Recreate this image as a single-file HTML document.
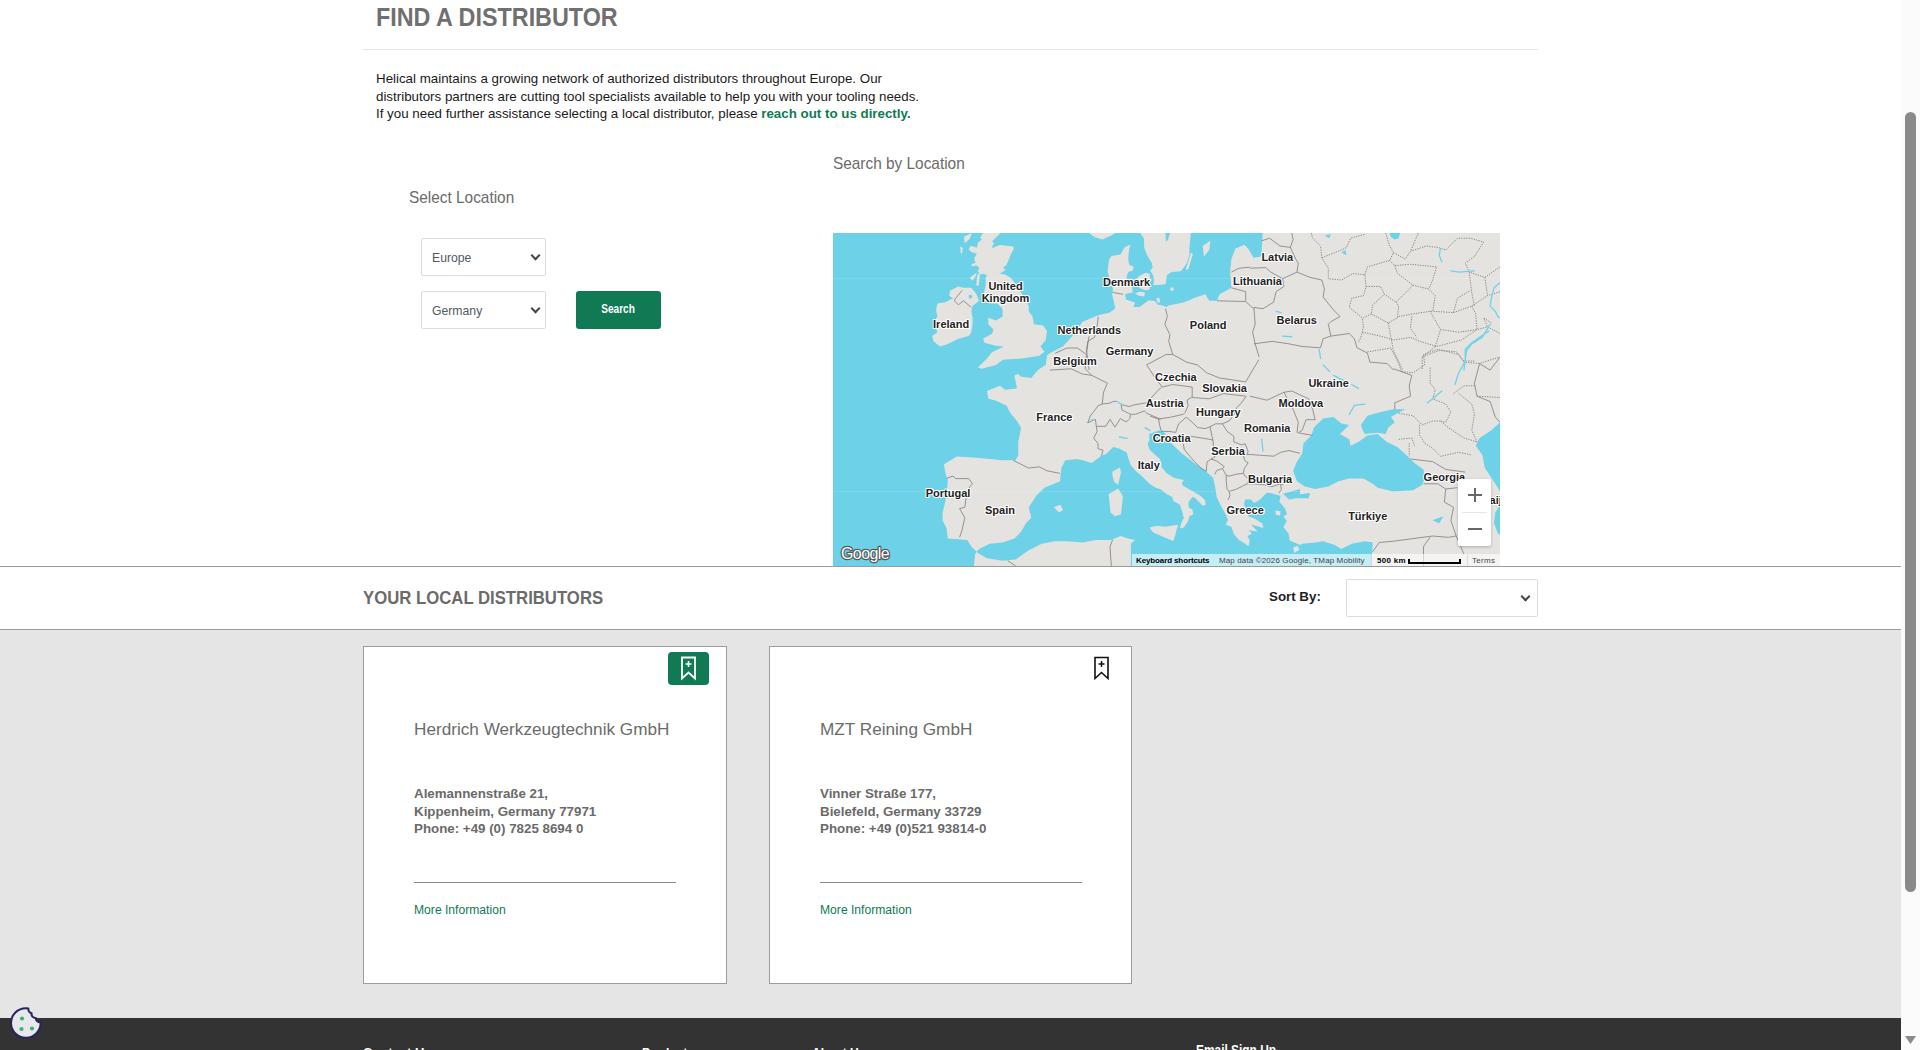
<!DOCTYPE html>
<html><head><meta charset="utf-8">
<style>
html,body{margin:0;padding:0;}
body{width:1920px;height:1050px;overflow:hidden;position:relative;background:#fff;font-family:"Liberation Sans",sans-serif;}
.abs{position:absolute;}
#sb{left:1901px;top:0;width:19px;height:1050px;background:#fbfbfb;}
#thumb{left:1905px;top:112px;width:11px;height:780px;background:#8a8a8a;border-radius:6px;}
h1{position:absolute;margin:0;left:376px;top:3px;font-size:25px;font-weight:bold;color:#707070;white-space:nowrap;transform:scaleX(0.934);transform-origin:0 0;}
#rule1{left:363px;top:49px;width:1175px;height:1px;background:#e8e8e8;}
#intro{left:376px;top:70px;font-size:13.33px;line-height:17.5px;color:#1a1a1a;white-space:nowrap;}
#intro a{color:#0f7a53;font-weight:bold;text-decoration:none;}
.tit{color:#6b6b6b;white-space:nowrap;transform:scaleX(0.905);transform-origin:0 0;}
.sel{position:absolute;box-sizing:border-box;border:1px solid #dcdcdc;border-radius:2px;background:#fff;}
.sel span{position:absolute;left:10px;font-size:13px;color:#505a5f;transform:scaleX(0.94);transform-origin:0 0;}
.chev{position:absolute;width:5px;height:5px;border-right:2px solid #3f474c;border-bottom:2px solid #3f474c;transform:rotate(45deg);}
#btn{left:576px;top:291px;width:85px;height:38px;background:#0f7a53;border-radius:3px;color:#fff;font-weight:bold;font-size:12px;text-align:center;line-height:36px;}
.attr{font-size:8px;line-height:9px;white-space:nowrap;}
#map{left:833px;top:233px;width:667px;height:333px;background:#6dd2e8;overflow:hidden;}
#rule2{left:0;top:566px;width:1901px;height:1px;background:#9a9a9a;}
#rule3{left:0;top:629px;width:1901px;height:1px;background:#9a9a9a;}
#grey{left:0;top:630px;width:1901px;height:388px;background:#e5e5e5;}
.ft{color:#fff;font-weight:bold;white-space:nowrap;}
#footer{left:0;top:1018px;width:1901px;height:32px;background:#333;}
.card{position:absolute;top:646px;height:338px;box-sizing:border-box;border:1px solid #9c9c9c;background:#fff;}
.card .name{position:absolute;left:50px;top:73px;font-size:17px;transform:scaleX(1.01);transform-origin:0 0;color:#6b6b6b;white-space:nowrap;}
.card .addr{position:absolute;left:50px;top:138px;font-size:13.33px;line-height:17.7px;font-weight:bold;color:#6a6a6a;white-space:nowrap;}
.card .hr{position:absolute;left:50px;top:235px;width:262px;height:1px;background:#8a8a8a;}
.card .more{position:absolute;left:50px;top:256px;font-size:12.5px;transform:scaleX(0.97);transform-origin:0 0;color:#0f7a53;white-space:nowrap;}
#ydist{left:363px;top:588px;font-size:17.5px;transform:scaleX(0.956);transform-origin:0 0;font-weight:bold;color:#6b6b6b;white-space:nowrap;}
#sortby{left:1269px;top:589px;font-size:13.33px;font-weight:bold;color:#222;white-space:nowrap;}
</style></head>
<body>
<div class="abs" id="sb"></div>
<div class="abs" id="thumb"></div>
<svg class="abs" style="left:1904px;top:1035px" width="13" height="10"><path d="M1 1 L12 1 L6.5 9 Z" fill="#8a8a8a"/></svg>

<h1>FIND A DISTRIBUTOR</h1>
<div class="abs" id="rule1"></div>
<div class="abs" id="intro">Helical maintains a growing network of authorized distributors throughout Europe. Our<br>distributors partners are cutting tool specialists available to help you with your tooling needs.<br>If you need further assistance selecting a local distributor, please <a>reach out to us directly.</a></div>

<div class="abs tit" id="selloc" style="left:409px;top:188px;font-size:17px;">Select Location</div>
<div class="abs tit" id="sbloc" style="left:833px;top:154px;font-size:17px;">Search by Location</div>

<div class="sel" style="left:421px;top:238px;width:125px;height:38px;"><span style="top:11px">Europe</span><div class="chev" style="left:110px;top:13px"></div></div>
<div class="sel" style="left:421px;top:291px;width:125px;height:38px;"><span style="top:11px">Germany</span><div class="chev" style="left:110px;top:13px"></div></div>
<div class="abs" id="btn"><span style="display:inline-block;transform:scaleX(0.84);">Search</span></div>

<div class="abs" id="map"><svg width="667" height="333" viewBox="0 0 667 333" style="display:block">
<rect width="667" height="333" fill="#e5e3df"/>
<path fill="#6dd2e8" d="M0.0 0.0 L256.1 0.0 L261.4 3.9 L269.2 6.5 L278.3 2.6 L282.2 0.0 L307.0 0.0 L310.9 5.2 L311.2 14.6 L314.2 22.2 L318.8 29.9 L319.6 34.4 L317.3 37.5 L320.3 42.8 L321.1 48.2 L320.3 52.0 L324.9 52.0 L332.5 51.2 L333.3 46.6 L334.1 42.1 L338.6 39.0 L347.8 38.2 L350.8 34.4 L353.9 29.9 L356.2 22.2 L356.6 13.0 L357.9 0.0 L429.7 0.0 L428.4 23.5 L420.5 24.8 L415.3 15.7 L411.4 11.7 L402.3 15.7 L398.4 26.1 L397.1 39.1 L398.4 54.8 L386.6 61.3 L384.0 67.8 L376.2 67.8 L372.3 61.3 L360.5 65.2 L351.4 69.2 L335.6 72.5 L333.3 74.1 L329.5 72.5 L324.9 71.8 L321.9 68.0 L315.8 67.2 L306.6 74.1 L300.5 74.1 L302.1 69.5 L292.9 66.4 L292.1 61.1 L299.8 59.6 L299.0 52.7 L293.7 49.7 L293.7 43.6 L295.2 39.0 L299.8 37.5 L300.5 33.7 L296.0 31.4 L295.2 26.1 L296.0 16.9 L297.5 11.6 L291.4 14.6 L287.6 21.5 L278.4 23.0 L276.1 26.8 L275.4 31.4 L274.6 39.0 L276.1 43.6 L280.0 55.8 L279.2 61.9 L280.7 68.0 L282.2 75.6 L276.9 79.4 L265.3 82.2 L249.6 88.7 L240.5 101.8 L230.0 113.5 L217.0 120.0 L214.0 122.8 L212.7 131.9 L204.9 137.1 L198.3 145.0 L187.9 143.7 L185.3 141.1 L181.4 142.4 L184.0 155.4 L172.2 156.7 L167.0 152.8 L154.0 158.0 L155.3 165.8 L161.8 167.2 L173.5 172.4 L177.5 180.2 L184.0 188.0 L187.9 194.6 L187.9 196.0 L185.3 209.0 L185.3 222.1 L182.7 227.3 L169.6 227.3 L156.6 226.0 L143.5 224.7 L124.0 223.4 L110.9 231.2 L112.2 239.1 L114.8 248.2 L113.5 261.2 L112.2 269.1 L109.6 279.5 L109.6 287.3 L113.5 295.2 L114.8 305.6 L125.3 306.3 L134.4 306.9 L138.3 313.4 L143.5 318.7 L142.2 321.3 L140.9 333.0 L0.0 333.0ZM143.5 318.7 L146.1 316.0 L156.6 310.8 L169.6 309.5 L181.4 305.6 L187.9 299.1 L193.1 289.9 L198.3 284.7 L195.7 274.3 L203.5 262.5 L211.4 254.7 L227.0 248.2 L228.3 235.1 L232.3 227.3 L244.0 226.0 L249.6 227.3 L258.8 229.9 L269.2 222.1 L272.7 221.3 L280.3 214.1 L286.0 215.6 L293.7 219.4 L295.6 226.0 L297.5 231.8 L303.2 238.4 L308.9 243.2 L316.5 250.8 L322.2 254.6 L328.0 256.5 L333.7 261.3 L339.4 264.1 L340.3 268.0 L347.0 271.8 L348.9 277.5 L350.8 285.1 L348.0 290.8 L347.0 295.6 L350.8 294.6 L354.6 288.9 L356.5 283.2 L360.3 281.3 L359.4 276.5 L355.6 274.6 L355.6 268.9 L359.4 264.1 L362.2 265.1 L367.0 269.9 L369.9 272.7 L372.7 271.8 L371.8 267.0 L368.0 263.2 L360.3 258.4 L349.9 252.7 L348.9 249.9 L350.8 247.0 L341.3 245.1 L333.7 240.3 L328.9 234.6 L327.0 226.0 L320.3 220.3 L316.5 216.5 L314.6 210.8 L316.5 207.0 L316.2 201.1 L326.6 197.2 L331.8 199.8 L337.0 208.9 L347.5 219.3 L362.2 230.8 L371.8 237.5 L380.1 244.7 L382.4 255.0 L383.6 264.1 L387.0 271.0 L389.3 275.6 L392.7 281.3 L395.0 287.0 L392.7 291.6 L398.4 293.9 L400.7 300.7 L405.3 306.4 L411.0 309.9 L415.6 313.3 L416.7 307.6 L414.4 303.0 L419.0 300.7 L415.6 297.3 L424.7 298.4 L417.9 291.6 L427.0 293.9 L430.4 295.0 L429.3 290.4 L422.4 285.9 L415.6 283.6 L413.3 277.9 L411.0 271.0 L412.1 266.4 L417.9 266.4 L421.3 269.9 L427.0 266.4 L433.9 259.6 L440.7 260.7 L447.6 263.0 L446.4 268.7 L452.1 275.6 L453.9 281.3 L450.4 283.6 L453.9 288.1 L450.4 293.9 L455.6 300.7 L456.7 307.6 L467.0 312.1 L469.2 310.8 L482.2 309.5 L490.1 308.2 L501.8 312.1 L508.3 316.0 L518.8 310.8 L531.8 308.2 L539.7 309.5 L538.3 333.0 L297.9 333.0 L297.9 310.8 L301.8 306.9 L295.3 305.6 L287.5 303.0 L278.3 306.9 L262.7 306.9 L249.6 309.5 L234.9 308.2 L221.8 308.2 L208.8 310.8 L195.7 317.3 L182.7 326.5 L169.6 327.8 L154.0 325.2 L144.8 320.0ZM500.5 184.1 L508.3 190.6 L516.2 191.9 L507.0 201.1 L516.2 206.3 L517.5 212.8 L525.3 208.9 L534.4 202.4 L544.9 201.1 L547.5 203.7 L554.0 208.9 L564.4 214.1 L577.5 225.9 L581.4 229.9 L590.5 236.4 L591.8 245.6 L589.2 252.1 L580.1 257.3 L560.5 258.6 L544.9 254.7 L539.7 250.8 L530.5 245.6 L516.2 245.6 L505.7 248.2 L495.3 253.4 L482.2 256.0 L471.8 253.4 L464.0 248.2 L460.1 237.8 L464.0 228.6 L469.2 220.7 L470.5 210.2 L478.3 202.4 L480.9 194.6 L490.1 185.4ZM527.9 191.9 L534.4 182.8 L547.5 178.9 L560.5 176.3 L572.3 176.3 L564.4 180.2 L557.9 184.1 L561.8 189.3 L555.3 194.6 L552.7 201.1 L544.9 199.8 L531.8 201.1 L529.2 195.9ZM667.0 189.3 L658.4 197.2 L646.6 205.0 L642.7 212.8 L649.3 222.0 L651.9 235.1 L662.3 250.8 L667.0 258.6ZM667.0 271.7 L662.3 279.5 L661.0 289.9 L664.9 300.4 L667.0 301.7ZM449.9 260.7 L467.0 256.1 L467.0 261.9 L456.7 264.1 L452.1 263.6 L477.0 259.9 L475.7 265.2 L462.7 265.2 L456.1 266.5ZM599.7 287.3 L610.1 283.4 L606.2 289.9Z"/>
<path fill="#e5e3df" d="M460.1 314.4 L464.7 312.7 L466.4 316.7 L461.3 320.1ZM442.4 277.3 L447.6 278.4 L447.0 282.4 L443.0 281.9ZM143.2 52.3 L144.4 41.5 L147.0 40.8 L145.7 53.0ZM127.2 13.4 L129.8 14.7 L129.1 20.4 L127.8 20.4ZM136.8 44.7 L143.8 39.6 L142.5 43.4 L139.3 47.8ZM150.2 0.0 L167.4 0.0 L159.1 8.3 L161.0 10.2 L158.5 15.3 L166.8 12.1 L180.2 13.4 L180.8 15.9 L178.2 20.4 L175.7 26.8 L173.1 32.5 L170.0 34.4 L172.5 37.0 L166.8 40.8 L171.9 41.5 L177.6 44.7 L180.8 48.5 L184.0 54.2 L189.2 61.3 L193.1 67.8 L195.7 73.1 L195.7 78.3 L199.6 83.5 L200.9 91.3 L210.1 92.6 L214.0 97.9 L212.7 107.0 L207.5 113.5 L211.4 118.7 L206.2 122.8 L189.2 125.4 L180.1 126.1 L169.6 126.7 L163.1 131.9 L148.7 135.8 L144.8 134.5 L154.0 125.4 L159.2 118.9 L170.9 113.7 L161.8 112.4 L151.4 109.7 L150.1 105.8 L159.2 100.6 L160.5 96.6 L155.3 91.3 L155.3 84.8 L163.1 87.4 L169.6 83.5 L169.6 75.7 L164.4 70.5 L156.6 70.5 L151.4 65.2 L150.8 60.6 L152.7 52.3 L152.7 44.7 L154.0 42.1 L150.2 40.8 L147.0 41.5 L145.1 38.3 L146.3 34.4 L143.8 32.5 L139.3 33.2 L138.1 31.3 L142.5 30.0 L141.2 25.5 L143.8 20.4 L138.1 19.1 L135.5 15.9 L138.1 12.8 L143.8 14.7 L145.1 9.6 L148.9 6.4 L147.0 4.5ZM117.4 57.4 L125.3 53.5 L130.5 54.8 L138.3 54.8 L143.5 61.3 L146.1 67.8 L139.6 73.1 L138.3 78.3 L139.6 84.8 L139.6 91.3 L138.3 99.2 L135.7 103.1 L125.3 105.7 L114.8 110.9 L107.0 113.5 L100.5 108.3 L99.2 103.1 L104.4 99.2 L103.1 95.3 L100.5 90.0 L104.4 83.5 L103.1 77.0 L104.4 70.5 L112.2 69.2 L120.0 65.2 L116.1 62.6ZM131.0 3.8 L138.7 0.0 L136.8 5.7 L131.7 10.2ZM306.6 42.8 L312.7 39.8 L316.5 40.5 L317.3 46.6 L316.5 56.5 L312.7 57.3 L308.2 55.8 L303.6 52.7 L302.8 46.6ZM302.1 60.3 L306.6 58.8 L312.0 59.6 L311.2 63.4 L305.1 62.6ZM337.1 55.0 L340.2 54.2 L340.9 57.3 L337.9 58.1ZM323.4 64.9 L326.4 64.9 L327.2 69.5 L324.2 69.5ZM369.7 13.0 L377.5 7.8 L376.2 17.0 L371.0 23.5ZM352.7 36.5 L357.9 19.6 L359.9 20.9 L355.3 36.5ZM279.4 238.4 L287.0 234.6 L288.0 239.4 L285.1 251.8 L281.3 248.9 L279.4 242.2ZM275.6 261.3 L285.1 255.6 L289.9 263.2 L288.0 281.3 L282.2 283.2 L277.5 279.4 L276.5 268.9ZM316.5 294.6 L324.1 292.7 L331.8 293.7 L345.1 291.8 L342.2 302.2 L340.3 308.0 L328.9 303.2 L320.3 299.4ZM220.9 274.3 L227.4 271.7 L230.0 276.9 L226.1 279.5Z"/>
<rect x="0" y="45" width="667" height="1" fill="#fff" fill-opacity="0.13"/><rect x="0" y="258" width="667" height="1" fill="#fff" fill-opacity="0.13"/>
<path fill="none" stroke="#7d7d7d" stroke-width="0.8" stroke-linejoin="round" d="M129.2 57.4 L122.7 65.2 L121.3 67.8 L125.3 71.8 L130.5 67.8 L138.3 74.4M279.6 59.4 L290.1 61.3M265.3 83.5 L264.0 93.9 L261.4 104.4 L254.8 108.3 L253.5 117.4 L256.1 137.0M332.5 75.7 L334.4 83.5 L331.8 91.3 L337.0 101.8 L335.7 108.3 L339.7 121.3M384.0 67.8 L412.7 68.5 L420.5 75.7M398.4 54.8 L412.7 58.7 L412.7 67.8M398.4 39.1 L406.2 35.2 L417.0 34.2M428.7 7.8 L436.6 5.2 L447.0 13.0 L457.4 14.4 L460.1 6.5 L458.8 0.0M417.0 35.2 L432.7 34.6 L437.9 39.1 L449.6 45.7 L464.0 39.1 L465.3 30.0 L462.7 26.1 L457.4 14.4M449.6 45.7 L450.9 53.5 L443.1 58.7 L440.5 69.2 L430.0 75.7 L420.9 74.4M464.0 39.1 L477.0 44.4 L488.8 47.0 L491.4 56.1 L490.1 63.9 L495.3 70.5 L500.5 77.0 L507.0 83.5 L497.9 88.7 L495.3 91.3 L497.9 103.1 L490.1 105.7 L487.5 114.8M420.9 110.9 L439.2 108.3 L456.1 110.9 L469.2 113.5 L487.5 114.8M497.9 103.1 L516.2 100.5 L521.4 105.7 L524.0 114.8 L534.4 120.0 L537.0 129.2 L554.0 130.5 L560.5 137.0M420.9 74.4 L422.2 91.3 L419.6 99.2 L422.2 110.9 L426.1 124.0M256.1 103.2 L254.8 111.0 L253.5 120.2M217.0 137.1 L237.9 135.8 L249.6 141.1 L258.8 142.4M222.2 120.2 L234.0 115.0 L244.4 115.0 L253.5 121.5 L252.2 135.8 L258.8 142.4 L274.4 150.2 L270.5 159.3 L269.2 171.1M269.3 171.0 L277.0 170.1 L280.4 168.4 L283.9 168.4M289.9 171.9 L295.9 173.6 L301.0 171.9 L311.3 170.1 L313.0 170.1 L319.0 164.1 L325.9 156.4 L328.4 154.7M269.3 171.0 L265.0 172.7 L263.3 175.3 L257.3 183.0 L254.7 189.9 L259.9 187.3 L262.4 186.4 L263.3 193.3 L272.7 193.3 L277.0 186.4 L282.1 194.1 L287.3 185.6 L293.3 189.0 L296.7 185.6 L297.6 181.3 L294.1 179.6 L289.0 177.0 L288.1 171.9 L289.9 171.9M297.6 181.3 L302.7 181.3 L311.3 177.9 L313.9 180.4 L324.1 184.7 L327.6 186.4M263.3 193.3 L264.1 198.4 L260.7 205.3 L265.0 210.4 L265.0 215.6 L270.1 217.3 L268.4 222.4M313.6 131.9 L333.1 121.5 L339.7 121.5 L354.0 129.3 L364.4 131.9 L373.6 139.8 L386.6 145.0 L412.7 148.9M313.6 131.9 L321.4 143.7 L329.2 154.1 L339.7 151.5 L359.2 154.1 L359.2 164.5M412.7 148.9 L425.8 126.7M359.2 164.5 L376.2 165.8 L390.5 160.6 L412.7 163.2M358.9 164.1 L354.1 167.0 L355.1 172.7 L352.2 179.4 L350.3 181.3 L338.0 184.1 L325.6 186.0 L317.0 183.2M325.6 186.0 L326.5 191.8 L328.4 198.4 L336.0 198.4 L342.7 199.4 L345.6 190.8 L351.3 186.0 L353.2 184.1 L358.9 188.9 L364.6 194.6 L372.2 195.6 L377.0 193.7 L382.7 190.8 L389.4 190.8 L396.0 188.0 L400.8 182.2 L403.7 174.6 L408.4 169.9 L413.2 163.2M377.0 193.7 L378.9 203.2 L379.9 207.0 L380.8 217.5 L381.8 224.1 L378.0 226.0M350.3 210.8 L351.3 216.5 L360.8 228.0 L367.5 234.6 L373.2 238.4M357.0 203.2 L369.4 205.1 L379.9 207.0M373.2 238.4 L374.1 228.9 L378.0 226.0 L383.7 228.0 L391.3 233.7 L389.4 235.6 L383.7 237.5 L381.8 241.3M389.4 235.6 L393.2 242.2 L396.0 243.2 L402.7 241.3 L410.3 240.3 L411.3 235.6 L415.1 229.9 L412.2 228.0 L410.3 223.2 L414.1 221.3M389.4 190.8 L394.1 198.4 L400.8 203.2 L400.8 208.9 L408.4 211.8 L412.2 210.8 L415.1 218.4 L414.1 221.3 L426.5 222.2 L440.8 223.2 L447.5 219.4 L456.0 217.5 L467.0 220.3M393.2 242.2 L393.2 248.0 L394.1 256.5 L396.0 258.4 L397.0 262.2 L395.1 267.0M396.0 258.4 L402.7 256.5 L408.4 253.7 L414.1 250.8 L421.8 250.8 L431.3 251.8 L438.9 253.7 L447.5 250.8 L450.3 251.8M410.3 240.3 L412.2 243.2 L416.0 246.0 L414.1 250.8M447.5 250.8 L448.4 256.5 L445.6 260.3M560.5 135.8 L578.8 142.4 L576.2 152.8 L577.5 163.2 L561.8 169.8 L561.8 176.3M417.0 163.2 L434.0 167.2 L450.9 159.3 L458.8 158.0 L475.7 165.8 L479.6 176.3 L482.2 186.7 L473.1 186.7 L469.2 197.2 L465.3 199.8 L479.6 202.4M450.9 159.3 L460.1 176.3 L465.3 189.3 L464.0 199.8M667.0 124.1 L657.1 137.1 L646.6 130.6 L641.4 150.2 L644.0 163.2 L657.1 168.5 L662.3 184.1 L667.0 189.3M113.5 245.6 L120.0 243.0 L122.7 245.6 L135.7 245.6 L139.6 250.8 L137.0 253.4 L133.1 265.2 L131.8 274.3 L126.6 275.6 L131.8 284.7 L129.2 296.5 L126.6 304.3M180.1 227.3 L195.7 235.1 L206.2 233.8 L214.0 237.8 L227.0 240.4M174.8 327.8 L182.7 333.0M279.6 306.9 L277.0 313.4 L278.3 333.0M590.5 250.8 L604.9 250.8 L612.7 256.0 L624.5 254.7M577.5 226.0 L599.7 228.6 L612.7 236.4 L632.3 239.1M612.7 256.0 L611.4 269.1 L620.5 274.3 L617.9 287.3 L623.2 303.0 L631.0 321.3M539.7 318.7 L546.2 309.5 L560.5 308.2 L580.1 305.6 L599.7 303.0 L615.3 304.3 L623.2 303.0M597.1 304.3 L590.5 313.4 L590.5 333.0"/>
<path fill="none" stroke="#8a8a8a" stroke-width="1" stroke-dasharray="1.3 1.2" d="M478.3 0.0 L479.6 5.2 L487.5 13.0 L488.8 24.8 L495.3 35.2 L495.3 45.7 L508.3 47.0 L520.1 40.4 L531.8 41.8 L533.1 53.5 L530.5 62.6 L518.8 65.2 L516.2 74.4 L529.2 84.8 L530.5 93.9 L527.9 104.4 L525.3 109.6M488.8 24.8 L508.3 17.0 L513.6 14.4 L517.5 5.2 L531.8 1.3M552.7 0.0 L556.6 13.0 L560.5 19.6 L556.6 27.4 L534.4 33.9 L531.8 41.8M560.5 19.6 L572.3 26.1 L577.5 18.3 L593.1 13.0 L604.9 14.4 L612.7 17.0 L624.5 5.2 L637.5 5.2 L650.6 9.1 L641.4 23.5 L632.3 30.0 L636.2 39.1 L651.9 44.4 L667.0 33.9M585.3 0.0 L577.5 18.3M556.6 27.4 L561.8 32.6 L577.5 31.3 L590.5 32.6 L603.6 33.9 L599.7 47.0 L595.8 56.1M561.8 32.6 L564.4 40.4 L580.1 52.2 L595.8 56.1 L602.3 62.6 L599.7 78.3 L620.5 79.6 L638.8 73.1 L654.5 62.6 L667.0 58.7M533.1 53.5 L547.5 53.5 L551.4 61.3 L563.1 69.2 L580.1 52.2M551.4 61.3 L539.7 71.8 L538.3 80.9 L555.3 90.0 L564.4 84.8 L565.7 73.1 L563.1 69.2M530.5 84.8 L538.3 80.9M565.7 83.5 L580.1 80.9 L597.1 78.3 L599.7 78.3M651.9 44.4 L654.5 62.6M636.2 39.1 L638.8 60.0 L641.4 73.1M620.5 79.6 L624.5 65.2 L637.5 57.4M529.2 99.2 L547.5 103.1 L560.5 107.0 L577.5 104.4 L586.6 108.3 L603.6 113.5 L628.4 107.0 L644.0 96.6 L654.5 93.9 L667.0 100.5M555.3 90.0 L557.9 104.4 L560.5 117.4 L569.7 137.0M578.8 83.5 L577.5 95.3 L584.0 104.4M597.1 78.3 L607.5 96.6 L602.3 113.5M607.5 96.6 L625.8 99.2 L644.0 96.6 L642.7 80.9 L638.8 73.1M602.3 113.5 L589.2 124.0 L589.2 137.0M589.2 124.0 L606.2 117.4 L623.2 118.7 L631.0 129.2 L646.6 130.5 L658.4 126.6 L667.0 124.0M658.4 90.0 L650.6 84.8 L654.5 93.9M534.4 118.9 L557.9 115.0 L565.7 130.6 L568.4 138.4 L580.1 139.8 L591.8 131.9 L590.5 121.5 L604.9 116.3 L625.8 121.5 L631.0 128.0 L641.4 128.0M597.1 134.5 L597.1 150.2 L602.3 156.7 L599.7 165.8 L612.7 171.1 L617.9 178.9 L612.7 189.3 L607.5 188.0M565.7 180.2 L580.1 182.8 L589.2 191.9 L599.7 188.0 L607.5 188.0 L615.3 194.6 L631.0 205.0 L644.0 208.9M586.6 191.9 L586.6 202.4 L591.8 210.2 L599.7 215.4 L607.5 223.3 L625.8 219.3 L638.8 222.0M625.8 160.6 L638.8 171.1 L641.4 181.5 L638.8 197.2 L644.0 208.9M620.5 160.6 L631.0 152.8 L641.4 152.8M644.0 163.2 L667.0 164.5M576.2 210.2 L576.2 223.3M565.7 206.3 L578.8 205.0 L581.4 212.8"/>
<path fill="none" stroke="#6dd2e8" stroke-width="1.3" stroke-linecap="round" d="M286.4 204.0 L294.1 205.3M312.1 194.6 L316.9 197.6M667.0 49.6 L661.0 54.8 L658.4 65.2 L657.1 73.1 L662.3 78.3 L664.9 83.5 L667.0 84.8M657.1 91.3 L649.3 104.4 L638.8 110.9 L633.6 117.4 L632.3 125.3 L631.0 137.0M617.9 37.8 L625.8 39.1 L641.4 37.8M607.5 15.7 L606.2 22.2 L608.8 28.7M449.6 103.1 L458.8 103.7M443.1 78.3 L448.3 79.6M655.8 98.0 L638.8 109.7 L632.3 116.3 L632.3 128.0 L625.8 139.8 L621.9 151.5M594.5 169.8 L599.7 165.8 L608.8 158.0M486.2 116.3 L487.5 125.4M490.1 131.9 L496.6 138.4M500.5 142.4 L510.9 147.6M518.8 151.5 L525.3 155.4M516.2 181.5 L521.4 172.4 L531.8 171.1M428.7 206.3 L430.0 218.0M449.6 103.2 L458.8 103.9"/>
<path fill="#6dd2e8" d="M257.3 186.4 L262.4 186.0 L261.6 187.3 L258.1 187.3ZM283.9 168.0 L289.9 171.0 L289.0 172.3 L284.7 169.7ZM135.5 62.5 L138.7 61.6 L139.3 64.8 L136.5 65.7ZM332.5 0.0 L337.0 0.0 L335.1 6.5 L332.9 9.1ZM599.7 287.3 L610.1 283.4 L606.2 289.9ZM556.6 0.0 L567.1 0.0 L565.7 5.2 L561.8 6.5 L557.9 3.9ZM491.4 2.6 L497.9 1.3 L496.6 5.2ZM508.3 19.6 L512.3 17.0 L513.6 22.2Z"/>
<g font-family="Liberation Sans" font-weight="bold" font-size="11" fill="#222" stroke="#fff" stroke-width="2.2" stroke-linejoin="round" paint-order="stroke" text-anchor="middle"><text x="172.5" y="56.8">United</text><text x="172.5" y="68.5">Kingdom</text><text x="118.1" y="94.6">Ireland</text><text x="293.6" y="52.8">Denmark</text><text x="444.3" y="28.0">Latvia</text><text x="424.5" y="52.2">Lithuania</text><text x="256.4" y="100.5">Netherlands</text><text x="375.2" y="95.9">Poland</text><text x="463.7" y="91.2">Belarus</text><text x="296.6" y="122.0">Germany</text><text x="242.0" y="132.4">Belgium</text><text x="342.9" y="147.6">Czechia</text><text x="391.5" y="158.7">Slovakia</text><text x="495.6" y="154.1">Ukraine</text><text x="331.8" y="174.3">Austria</text><text x="467.9" y="174.3">Moldova</text><text x="385.3" y="182.8">Hungary</text><text x="221.4" y="188.0">France</text><text x="434.2" y="199.1">Romania</text><text x="338.6" y="208.9">Croatia</text><text x="395.1" y="222.0">Serbia</text><text x="315.8" y="236.4">Italy</text><text x="437.1" y="249.5">Bulgaria</text><text x="611.4" y="247.5">Georgia</text><text x="115.1" y="263.8">Portugal</text><text x="167.0" y="280.8">Spain</text><text x="412.1" y="280.8">Greece</text><text x="534.7" y="287.3">Türkiye</text><text x="626" y="270.5" text-anchor="start">Azerbaijan</text></g>
</svg><div class="abs" id="mapov" style="left:0;top:0;width:667px;height:333px;">
<div class="abs" style="left:625px;top:246px;width:33px;height:67px;background:#fff;border-radius:2px;box-shadow:0 1px 3px rgba(0,0,0,0.25);"></div>
<div class="abs" style="left:635px;top:261px;width:14px;height:2px;background:#666;"></div>
<div class="abs" style="left:641px;top:255px;width:2px;height:14px;background:#666;"></div>
<div class="abs" style="left:629px;top:279px;width:25px;height:1px;background:#e6e6e6;"></div>
<div class="abs" style="left:635px;top:295px;width:14px;height:2px;background:#666;"></div>
<div class="abs" style="left:299px;top:321px;width:368px;height:12px;background:rgba(255,255,255,0.6);"></div>
<div class="abs attr" style="left:303px;top:323px;font-weight:bold;color:#000;letter-spacing:-0.12px;">Keyboard shortcuts</div>
<div class="abs attr" style="left:386px;top:323px;color:#444;letter-spacing:0.12px;">Map data ©2026 Google, TMap Mobility</div>
<div class="abs" style="left:538px;top:321px;width:1px;height:12px;background:rgba(200,200,200,0.6);"></div>
<div class="abs attr" style="left:544px;top:323px;font-weight:bold;color:#000;letter-spacing:0.3px;">500 km</div>
<div class="abs" style="left:575px;top:326px;width:53px;height:2px;border:2px solid #000;border-top:none;height:3px;box-sizing:content-box;width:49px;"></div>
<div class="abs" style="left:634px;top:321px;width:1px;height:12px;background:rgba(200,200,200,0.6);"></div>
<div class="abs attr" style="left:639px;top:323px;color:#444;letter-spacing:0.3px;">Terms</div>
<svg class="abs" style="left:6px;top:312px" width="60" height="20"><text x="2" y="13.5" font-family="Liberation Sans" font-size="16" fill="#fff" stroke="#555" stroke-width="2.4" stroke-linejoin="round" paint-order="stroke" letter-spacing="-0.6">Google</text></svg>
</div></div>

<div class="abs" id="rule2"></div>
<div class="abs" id="ydist">YOUR LOCAL DISTRIBUTORS</div>
<div class="abs" id="sortby">Sort By:</div>
<div class="sel" style="left:1346px;top:579px;width:192px;height:38px;"><div class="chev" style="left:175px;top:13px"></div></div>
<div class="abs" id="rule3"></div>
<div class="abs" id="grey"></div>

<div class="card" style="left:363px;width:364px;">
  <div class="abs" style="left:304px;top:5px;width:41px;height:33px;background:#0f7a53;border-radius:4px;"></div>
  <svg class="abs" style="left:316px;top:9px" width="18" height="25"><path d="M2 1.5 H15 V22.5 L8.5 16.5 L2 22.5 Z" fill="none" stroke="#fff" stroke-width="1.8" stroke-linejoin="miter"/><path d="M8.5 5 V11 M5.5 8 H11.5" stroke="#fff" stroke-width="1.6"/></svg>
  <div class="name">Herdrich Werkzeugtechnik GmbH</div>
  <div class="addr">Alemannenstraße 21,<br>Kippenheim, Germany 77971<br>Phone: +49 (0) 7825 8694 0</div>
  <div class="hr"></div>
  <div class="more">More Information</div>
</div>
<div class="card" style="left:769px;width:363px;">
  <svg class="abs" style="left:323px;top:9px" width="18" height="25"><path d="M2 1.5 H15 V22.5 L8.5 16.5 L2 22.5 Z" fill="none" stroke="#111" stroke-width="1.6" stroke-linejoin="miter"/><path d="M8.5 5 V11 M5.5 8 H11.5" stroke="#111" stroke-width="1.5"/></svg>
  <div class="name">MZT Reining GmbH</div>
  <div class="addr">Vinner Straße 177,<br>Bielefeld, Germany 33729<br>Phone: +49 (0)521 93814-0</div>
  <div class="hr"></div>
  <div class="more">More Information</div>
</div>

<div class="abs" id="footer"></div>
<div class="abs ft" style="left:363px;top:1045px;font-size:13px;">Contact Us</div>
<div class="abs ft" style="left:642px;top:1046px;font-size:12px;">Products</div>
<div class="abs ft" style="left:812px;top:1046px;font-size:12px;">About Us</div>
<div class="abs ft" style="left:1196px;top:1042px;font-size:14px;transform:scaleX(0.85);transform-origin:0 0;">Email Sign Up</div>
<svg class="abs" style="left:8px;top:1005px" width="36" height="36"><path d="M18 3.2 A14.8 14.8 0 1 0 32.6 17.5 C30 17.8 27.6 15.6 27.8 13 C25.2 13.2 23 10.8 23.6 8.2 C21.4 7.8 20 5.6 20.4 3.4 Z" fill="#e8e8ea" stroke="#27245e" stroke-width="2" stroke-linejoin="round"/><circle cx="14" cy="13.5" r="2.1" fill="#3bb27a"/><circle cx="13.5" cy="24" r="2.1" fill="#3bb27a"/><circle cx="24" cy="23.5" r="2.1" fill="#3bb27a"/></svg>
</body></html>
